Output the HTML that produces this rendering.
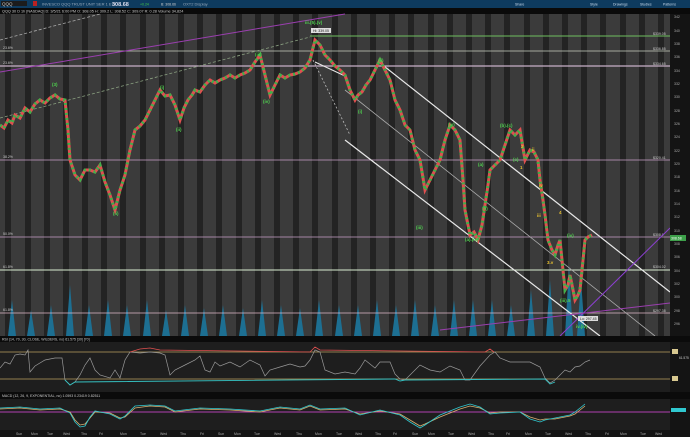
<!DOCTYPE html>
<html><head><style>
body{margin:0;width:690px;height:437px;overflow:hidden;background:#111;font-family:"Liberation Sans",sans-serif}
svg{display:block}
</style></head><body>
<svg width="690" height="437" viewBox="0 0 690 437" font-family="Liberation Sans, sans-serif">
<defs>
<polyline id="pr" fill="none" points="0,125 4,128 8,120 12,123 15,115 20,118 25,108 30,112 35,104 40,100 45,103 50,98 55,95 60,99 65,100 68,130 70,160 75,175 80,180 85,170 90,170 95,172 100,165 105,182 110,195 115,210 120,190 125,175 128,160 130,150 135,130 140,126 145,120 150,110 155,100 160,90 165,96 170,95 175,105 180,120 184,108 188,100 192,95 195,90 200,92 205,85 210,80 215,83 220,80 225,78 230,75 235,78 240,75 245,73 250,70 255,62 260,55 265,75 270,95 275,85 280,75 285,78 290,75 295,74 300,72 305,68 310,60 315,40 320,45 325,55 330,60 335,66 340,70 345,75 350,90 355,100 358,95 362,92 366,85 370,80 375,70 380,60 385,70 390,80 395,100 400,110 405,125 410,130 415,150 420,160 425,190 430,180 435,170 440,160 445,140 450,125 455,130 460,140 463,180 465,210 470,235 474,232 478,240 482,225 485,205 488,185 490,170 495,165 500,160 505,145 510,130 515,135 520,130 525,160 530,150 534,152 538,160 540,180 543,200 545,215 548,240 552,250 555,255 558,245 560,240 562,260 565,290 568,285 570,275 573,290 575,300 578,295 580,290 583,260 585,240 588,237 592,235"/>
</defs>
<rect width="690" height="437" fill="#151515"/>
<rect x="0" y="0" width="690" height="8" fill="#0e3b5f"/>
<rect x="1" y="1" width="26" height="5" fill="#1c1c1c"/>
<text x="2" y="5.5" font-size="4.5" fill="#ccc">QQQ</text>
<rect x="33" y="1" width="4" height="5" fill="#b22"/>
<text x="42" y="5.5" font-size="4" fill="#9ab">INVESCO QQQ TRUST UNIT SER 1 ETF</text>
<text x="112" y="6" font-size="5.5" fill="#dde" font-weight="bold">308.68</text>
<text x="140" y="5.5" font-size="3.5" fill="#4c4">+0.24</text>
<text x="161" y="5.5" font-size="3.5" fill="#ccc">B: 308.66</text>
<text x="183" y="5.5" font-size="4" fill="#9ab">OXT2 Display</text>
<text x="515" y="5.5" font-size="3.5" fill="#cde">Share</text>
<text x="590" y="5.5" font-size="3.5" fill="#cde">Style</text>
<text x="613" y="5.5" font-size="3.5" fill="#cde">Drawings</text>
<text x="640" y="5.5" font-size="3.5" fill="#cde">Studies</text>
<text x="663" y="5.5" font-size="3.5" fill="#cde">Patterns</text>
<rect x="0" y="8" width="690" height="6" fill="#0a0a0a"/>
<text x="2" y="12.5" font-size="3.8" fill="#ccc">QQQ 30 D 1h [NASDAQ]   D: 3/5/21 6:00 PM  O: 308.05  H: 309.2  L: 308.52  C: 309.07  R: 0.28  Volume 34,824</text>
<g>
<rect x="0" y="14" width="670" height="322" fill="#3b3b3b"/>
<g fill="#232323">
<rect x="5" y="14" width="6" height="322"/><rect x="25" y="14" width="6" height="322"/><rect x="44" y="14" width="6" height="322"/><rect x="63" y="14" width="6" height="322"/><rect x="82" y="14" width="6" height="322"/><rect x="101" y="14" width="6" height="322"/><rect x="120" y="14" width="6" height="322"/><rect x="140" y="14" width="6" height="322"/><rect x="159" y="14" width="6" height="322"/><rect x="178" y="14" width="6" height="322"/><rect x="197" y="14" width="6" height="322"/><rect x="216" y="14" width="6" height="322"/><rect x="236" y="14" width="6" height="322"/><rect x="255" y="14" width="6" height="322"/><rect x="274" y="14" width="6" height="322"/><rect x="293" y="14" width="6" height="322"/><rect x="312" y="14" width="6" height="322"/><rect x="332" y="14" width="6" height="322"/><rect x="351" y="14" width="6" height="322"/><rect x="370" y="14" width="6" height="322"/><rect x="389" y="14" width="6" height="322"/><rect x="408" y="14" width="6" height="322"/><rect x="428" y="14" width="6" height="322"/><rect x="447" y="14" width="6" height="322"/><rect x="466" y="14" width="6" height="322"/><rect x="485" y="14" width="6" height="322"/><rect x="504" y="14" width="6" height="322"/><rect x="524" y="14" width="6" height="322"/><rect x="543" y="14" width="6" height="322"/><rect x="562" y="14" width="6" height="322"/><rect x="581" y="14" width="6" height="322"/><rect x="600" y="14" width="6" height="322"/><rect x="620" y="14" width="6" height="322"/><rect x="639" y="14" width="6" height="322"/><rect x="658" y="14" width="6" height="322"/>
</g>
<g fill="#1d6f92">
<polygon points="8,336 12,300 16,336"/><polygon points="27,336 31,310 35,336"/><polygon points="47,336 51,305 55,336"/><polygon points="66,336 70,285 74,336"/><polygon points="85,336 89,305 93,336"/><polygon points="104,336 108,300 112,336"/><polygon points="123,336 127,305 131,336"/><polygon points="143,336 147,300 151,336"/><polygon points="162,336 166,310 170,336"/><polygon points="181,336 185,305 189,336"/><polygon points="200,336 204,308 208,336"/><polygon points="219,336 223,305 227,336"/><polygon points="239,336 243,308 247,336"/><polygon points="258,336 262,300 266,336"/><polygon points="277,336 281,305 285,336"/><polygon points="296,336 300,308 304,336"/><polygon points="315,336 319,300 323,336"/><polygon points="335,336 339,305 343,336"/><polygon points="354,336 358,305 362,336"/><polygon points="373,336 377,300 381,336"/><polygon points="392,336 396,305 400,336"/><polygon points="411,336 415,300 419,336"/><polygon points="431,336 435,305 439,336"/><polygon points="450,336 454,300 458,336"/><polygon points="469,336 473,300 477,336"/><polygon points="488,336 492,300 496,336"/><polygon points="507,336 511,305 515,336"/><polygon points="527,336 531,290 535,336"/><polygon points="546,336 550,280 554,336"/><polygon points="565,336 569,265 573,336"/><polygon points="577,336 581,280 585,336"/>
</g>
<line x1="310" y1="36" x2="670" y2="36" stroke="#6fbf5f" stroke-width="1"/>
<line x1="0" y1="51" x2="670" y2="51" stroke="#c8d0c0" stroke-width="0.8"/>
<line x1="0" y1="66" x2="670" y2="66" stroke="#c8b0c8" stroke-width="1.2"/>
<line x1="0" y1="160" x2="670" y2="160" stroke="#c8a0c8" stroke-width="0.8"/>
<line x1="0" y1="237" x2="670" y2="237" stroke="#c8a0c8" stroke-width="0.8"/>
<line x1="0" y1="270" x2="670" y2="270" stroke="#d8ecd0" stroke-width="1"/>
<line x1="0" y1="313" x2="670" y2="313" stroke="#e0b8c8" stroke-width="0.8"/>
<g font-size="3.5" fill="#ccc">
<text x="3" y="49">23.6%</text><text x="3" y="64">23.6%</text><text x="3" y="158">38.2%</text><text x="3" y="235">50.0%</text><text x="3" y="268">61.8%</text><text x="3" y="311">61.8%</text>
<text x="653" y="35">$339.05</text><text x="653" y="50">$336.85</text><text x="653" y="65">$334.65</text><text x="653" y="159">$320.41</text><text x="653" y="236">$308.9</text><text x="653" y="268">$304.02</text><text x="653" y="312">$297.38</text>
</g>
<line x1="0" y1="72" x2="345" y2="14" stroke="#9b3fb0" stroke-width="1"/>
<line x1="0" y1="40" x2="100" y2="14" stroke="#aaa" stroke-width="0.8" stroke-dasharray="3,2"/>
<line x1="0" y1="118" x2="310" y2="37" stroke="#8aa080" stroke-width="0.8" stroke-dasharray="3,2"/>
<line x1="313" y1="60" x2="350" y2="135" stroke="#bbb" stroke-width="0.8" stroke-dasharray="2,2"/>
<line x1="380" y1="63" x2="670" y2="292" stroke="#e8e8e8" stroke-width="1.2"/>
<line x1="315" y1="62" x2="345" y2="76" stroke="#e8e8e8" stroke-width="1"/>
<line x1="345" y1="140" x2="600" y2="336" stroke="#e8e8e8" stroke-width="1.2"/>
<line x1="345" y1="90" x2="655" y2="336" stroke="#aaa" stroke-width="0.8"/>
<line x1="560" y1="336" x2="670" y2="228" stroke="#8b3fd0" stroke-width="1"/>
<line x1="440" y1="330" x2="670" y2="303" stroke="#9b3fb0" stroke-width="1"/>
<use href="#pr" stroke="#e05050" stroke-width="3"/>
<use href="#pr" stroke="#3fb04a" stroke-width="3" stroke-dasharray="2,3"/>
<g font-size="4.5" fill="#4fd04f" font-weight="bold">
<text x="52" y="86">(3)</text><text x="160" y="89">(i)</text><text x="255" y="56">(iii)</text><text x="305" y="24">iii.(5).(v)</text><text x="263" y="103">(iv)</text><text x="113" y="215">(ii)</text><text x="176" y="131">(ii)</text><text x="378" y="62">(ii)</text><text x="358" y="113">(i)</text><text x="416" y="229">(iii)</text><text x="448" y="126">(iv)</text><text x="465" y="241">(a).(iv)</text><text x="478" y="166">(a)</text><text x="482" y="210">(b)</text><text x="500" y="127">(b).(c)</text><text x="513" y="161">(c)</text><text x="567" y="237">(iv)</text><text x="560" y="302">(iii).5</text><text x="576" y="328">iv.(iv)</text>
</g>
<g font-size="4.5" fill="#e8c030" font-weight="bold">
<text x="521" y="148">2</text><text x="532" y="151">ii</text><text x="520" y="169">1</text><text x="539" y="187">iv</text><text x="537" y="217">iii</text><text x="559" y="214">4</text><text x="547" y="264">3.v</text>
</g>
<rect x="311" y="28" width="20" height="5" fill="#ddd"/>
<text x="313" y="32" font-size="3.5" fill="#222">Hi: 339.05</text>
<rect x="578" y="316" width="20" height="5" fill="#ddd"/>
<text x="580" y="320" font-size="3.5" fill="#222">Lo: 297.45</text>
</g>
<rect x="670" y="14" width="20" height="322" fill="#141414"/>
<g font-size="3.5" fill="#aaa">
<text x="674" y="18">342</text><text x="674" y="32">340</text><text x="674" y="45">338</text><text x="674" y="58">336</text><text x="674" y="72">334</text><text x="674" y="85">332</text><text x="674" y="98">330</text><text x="674" y="112">328</text><text x="674" y="125">326</text><text x="674" y="138">324</text><text x="674" y="152">322</text><text x="674" y="165">320</text><text x="674" y="178">318</text><text x="674" y="192">316</text><text x="674" y="205">314</text><text x="674" y="218">312</text><text x="674" y="232">310</text><text x="674" y="245">308</text><text x="674" y="258">306</text><text x="674" y="272">304</text><text x="674" y="285">302</text><text x="674" y="298">300</text><text x="674" y="312">298</text><text x="674" y="325">296</text>
</g>
<rect x="670" y="235" width="16" height="6" fill="#3da04a"/>
<text x="671" y="239.5" font-size="3.5" fill="#fff">308.68</text>
<rect x="0" y="336" width="690" height="6" fill="#0b0b0b"/>
<text x="2" y="340.5" font-size="3.5" fill="#ccc">RSI (14, 70, 30, CLOSE, WILDERS, no)  61.575  [30] [70]</text>
<rect x="0" y="342" width="670" height="50" fill="#1e1e1e"/>
<line x1="0" y1="352" x2="670" y2="352" stroke="#b8a060" stroke-width="0.8"/>
<line x1="0" y1="379" x2="670" y2="379" stroke="#b8a060" stroke-width="0.8"/>
<polyline fill="none" stroke="#999" stroke-width="0.7" points="0,368 5,362 10,364 15,355 20,354 25,355 28,350 30,372 35,366 45,360 55,358 62,358 65,380 70,385 75,382 80,375 85,365 90,358 95,370 100,375 110,378 115,370 120,378 125,360 130,352 140,353 150,352 160,353 165,355 170,375 175,370 185,365 195,360 200,356 205,370 210,372 215,362 220,366 230,362 240,367 250,360 260,365 265,376 270,370 280,367 290,364 300,367 305,366 310,360 315,350 320,352 325,370 335,374 345,372 355,374 360,368 365,360 375,368 380,362 390,362 395,374 400,379 405,380 410,375 420,365 430,370 440,372 450,366 460,370 465,380 470,380 480,366 490,355 495,352 500,358 510,362 520,362 530,362 540,367 545,378 550,383 555,380 560,375 565,370 570,372 575,367 580,366 585,362 590,360"/>
<polyline fill="none" stroke="#e05050" stroke-width="0.8" points="130,352 140,349 150,348 160,350 310,352 315,347 320,350 485,352 490,349 494,352"/>
<polyline fill="none" stroke="#35c0c0" stroke-width="0.9" points="65,380 70,385 75,382 395,379 400,381 405,380 545,379 550,384 555,382"/>
<rect x="670" y="342" width="20" height="50" fill="#141414"/>
<rect x="672" y="349" width="6" height="5" fill="#d8c890"/><rect x="672" y="376" width="6" height="5" fill="#d8c890"/>
<text x="679" y="359" font-size="3.2" fill="#ccc">61.575</text>
<rect x="0" y="392" width="690" height="7" fill="#0b0b0b"/>
<text x="2" y="397" font-size="3.5" fill="#ccc">MACD (12, 26, 9, EXPONENTIAL, no)  1.0593  0.23419  0.82511</text>
<rect x="0" y="399" width="670" height="31" fill="#1e1e1e"/>
<line x1="0" y1="412" x2="670" y2="412" stroke="#b040b0" stroke-width="0.9"/>
<polyline fill="none" stroke="#d8b070" stroke-width="0.8" points="0,409 20,408 40,410 60,409 70,412 75,420 80,425 85,424 90,418 95,412 110,413 120,418 125,417 135,408 150,406 165,407 175,412 200,409 230,410 260,412 280,408 300,410 310,406 320,410 345,409 360,414 380,411 400,414 410,420 420,426 425,424 440,417 460,409 470,406 480,408 490,413 500,412 520,412 530,417 540,420 545,419 555,419 570,416 575,414 585,406"/>
<polyline fill="none" stroke="#30c8d0" stroke-width="0.8" points="0,408 20,407 40,409 60,408 70,413 75,422 80,427 85,426 90,417 95,411 110,414 120,419 125,416 135,406 150,405 165,406 175,411 200,408 230,409 260,411 280,407 300,409 310,405 320,409 345,408 360,415 380,410 400,415 410,422 420,428 425,425 440,415 460,407 470,404 480,407 490,414 500,413 520,412 530,419 540,422 545,420 555,418 570,415 575,412 585,404"/>
<rect x="670" y="399" width="20" height="31" fill="#141414"/>
<rect x="671" y="408" width="15" height="4" fill="#30c8d0"/>
<rect x="0" y="430" width="690" height="7" fill="#141414"/>
<g font-size="3.5" fill="#aaa">
<text x="16" y="435">Sun</text><text x="31" y="435">Mon</text><text x="47" y="435">Tue</text><text x="63" y="435">Wed</text><text x="81" y="435">Thu</text><text x="99" y="435">Fri</text><text x="120" y="435">Mon</text><text x="140" y="435">Tue</text><text x="160" y="435">Wed</text><text x="180" y="435">Thu</text><text x="200" y="435">Fri</text><text x="218" y="435">Sun</text><text x="234" y="435">Mon</text><text x="254" y="435">Tue</text><text x="274" y="435">Wed</text><text x="296" y="435">Thu</text><text x="315" y="435">Mon</text><text x="336" y="435">Tue</text><text x="355" y="435">Wed</text><text x="375" y="435">Thu</text><text x="393" y="435">Fri</text><text x="412" y="435">Sun</text><text x="428" y="435">Mon</text><text x="448" y="435">Tue</text><text x="468" y="435">Wed</text><text x="488" y="435">Thu</text><text x="506" y="435">Fri</text><text x="525" y="435">Mon</text><text x="545" y="435">Tue</text><text x="565" y="435">Wed</text><text x="585" y="435">Thu</text><text x="605" y="435">Fri</text><text x="620" y="435">Mon</text><text x="640" y="435">Tue</text><text x="655" y="435">Wed</text>
</g>
</svg>
</body></html>
